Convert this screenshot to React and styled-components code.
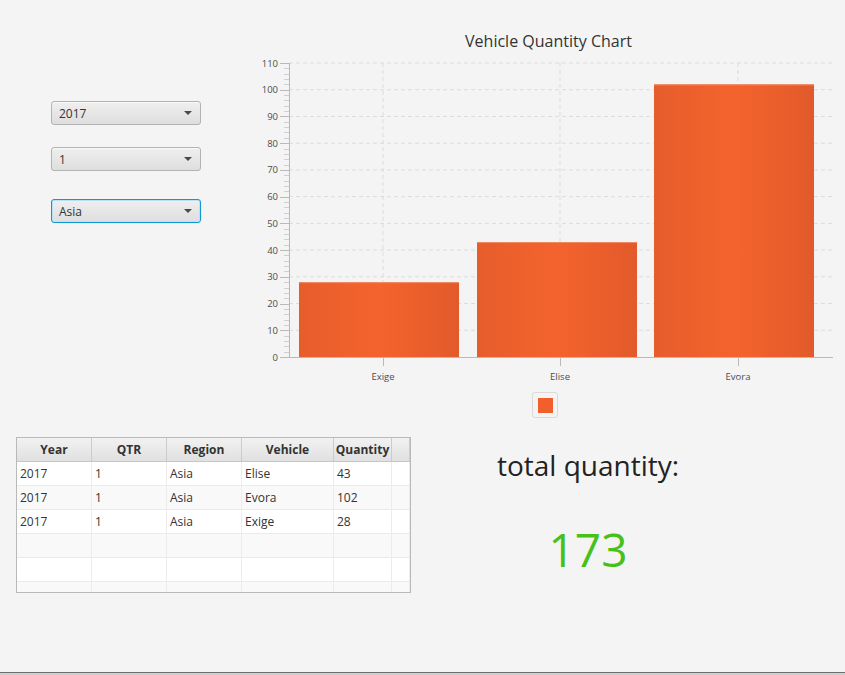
import React from 'react';
import styled, { createGlobalStyle } from 'styled-components';

const GlobalStyle = createGlobalStyle`
  html, body {
    margin: 0;
    padding: 0;
    background: #f4f4f4;
  }
  body {
    font-family: 'Open Sans', 'Noto Sans', 'Liberation Sans', sans-serif;
    color: #333;
  }
`;

const data = [
  { year: '2017', qtr: '1', region: 'Asia', vehicle: 'Elise', quantity: 43 },
  { year: '2017', qtr: '1', region: 'Asia', vehicle: 'Evora', quantity: 102 },
  { year: '2017', qtr: '1', region: 'Asia', vehicle: 'Exige', quantity: 28 },
];

const bars = [
  { name: 'Exige', value: 28, x: 299, center: 383 },
  { name: 'Elise', value: 43, x: 477, center: 560 },
  { name: 'Evora', value: 102, x: 654, center: 738 },
];

const Page = styled.div`
  width: 845px;
  height: 675px;
  display: grid;
  grid-template-rows: 437px 1fr 3px;
  overflow: hidden;
`;

const TopRow = styled.div`
  display: grid;
  grid-template-columns: 250px 1fr;
`;

const Controls = styled.div`
  display: flex;
  flex-direction: column;
  padding: 101px 0 0 51px;
`;

const Combo = styled.div`
  width: 150px;
  height: 24px;
  box-sizing: border-box;
  margin-top: ${(p) => p.$offset || 0}px;
  display: flex;
  align-items: center;
  justify-content: space-between;
  padding: 0 8px 0 7px;
  border-radius: 3px;
  border: 1px solid ${(p) => (p.$focused ? '#0a9bd6' : '#b3b3b3')};
  box-shadow: ${(p) => (p.$focused ? 'inset 0 0 0 1px #b8e2f3' : 'inset 0 1px 0 #f8f8f8')};
  background: linear-gradient(#efefef, #dedede);
  font-size: 12px;
  color: #333;
`;

const Arrow = styled.span`
  width: 0;
  height: 0;
  border-left: 4px solid transparent;
  border-right: 4px solid transparent;
  border-top: 4px solid #4a4a4a;
`;

const ChartArea = styled.div`
  display: flex;
  flex-direction: column;
  align-items: flex-start;
`;

const ChartTitle = styled.div`
  width: 595px;
  margin-top: 30px;
  text-align: center;
  font-size: 16px;
  line-height: 22px;
  color: #333;
  text-indent: 2px;
`;

const ChartSvg = styled.svg`
  display: block;
  width: 595px;
  height: 333px;
  margin-top: 3px;
`;

const LegendBox = styled.div`
  margin: 4px 0 0 282px;
  width: 26px;
  height: 26px;
  box-sizing: border-box;
  border: 1px solid #dadada;
  border-radius: 3px;
  display: flex;
  align-items: center;
  justify-content: center;
`;

const LegendSymbol = styled.span`
  width: 15px;
  height: 15px;
  background: #f1602c;
`;

const BottomRow = styled.div`
  display: grid;
  grid-template-columns: 16px 395px 1fr;
`;

const Table = styled.div`
  grid-column: 2;
  height: 156px;
  box-sizing: border-box;
  border: 1px solid #b9b9b9;
  overflow: hidden;
  background: #fff;
`;

const Row = styled.div`
  display: grid;
  grid-template-columns: 75px 75px 75px 92px 58px 1fr;
  height: 24px;
  box-sizing: border-box;
  border-bottom: 1px solid ${(p) => (p.$header ? '#c6c6c6' : '#ebebeb')};
  background: ${(p) => (p.$header ? 'linear-gradient(#f2f2f2, #e0e0e0)' : p.$odd ? '#f9f9f9' : '#ffffff')};
`;

const Cell = styled.div`
  display: flex;
  align-items: center;
  justify-content: ${(p) => (p.$header ? 'center' : 'flex-start')};
  padding-left: ${(p) => (p.$header ? 0 : 3)}px;
  border-right: 1px solid ${(p) => (p.$header ? '#cbcbcb' : '#ececec')};
  font-size: 12px;
  font-weight: ${(p) => (p.$header ? 700 : 400)};
  color: #333;
  white-space: nowrap;
  overflow: hidden;
`;

const TotalPanel = styled.div`
  grid-column: 3;
  width: 240px;
  margin-left: 57px;
  display: flex;
  flex-direction: column;
  align-items: center;
`;

const TotalLabel = styled.div`
  margin-top: 8px;
  font-size: 28px;
  line-height: 40px;
  color: #222;
`;

const TotalValue = styled.div`
  margin-top: 32px;
  font-size: 46px;
  line-height: 64px;
  color: #45c11a;
`;

const BottomEdge = styled.div`
  border-top: 1px solid #6f6f6f;
  background: #cfcfcf;
`;

const scaleY = (v) => 357 - v * (294 / 110);

function Chart() {
  const majors = [];
  for (let v = 0; v <= 110; v += 10) majors.push(v);
  const minors = [];
  for (let v = 0; v < 110; v += 2) if (v % 10) minors.push(v);

  return (
    <ChartSvg viewBox="250 55 595 333">
      <defs>
        <linearGradient id="barFill" x1="0" x2="1" y1="0" y2="0">
          <stop offset="0" stopColor="#e65d2c" />
          <stop offset="0.5" stopColor="#f4632d" />
          <stop offset="1" stopColor="#e25a2b" />
        </linearGradient>
      </defs>
      {majors.slice(1).map((v) => (
        <line key={'h' + v} x1="289" x2="833" y1={scaleY(v)} y2={scaleY(v)} stroke="#dcdcdc" strokeDasharray="4 3" />
      ))}
      {bars.map((b) => (
        <line key={'v' + b.name} x1={b.center} x2={b.center} y1="63" y2="357" stroke="#dcdcdc" strokeDasharray="4 3" />
      ))}
      {bars.map((b) => (
        <g key={b.name}>
          <rect x={b.x} y={scaleY(b.value)} width="160" height={357 - scaleY(b.value)} fill="url(#barFill)" />
          <line x1={b.x} x2={b.x + 160} y1={scaleY(b.value) + 0.5} y2={scaleY(b.value) + 0.5} stroke="#f08a66" />
          <line x1={b.center + 0.5} x2={b.center + 0.5} y1="357" y2="366" stroke="#b9b9b9" />
          <text x={b.center} y="380" textAnchor="middle" fontSize="9.5" fill="#4d4d4d">{b.name}</text>
        </g>
      ))}
      {minors.map((v) => (
        <line key={'m' + v} x1="284" x2="289" y1={Math.round(scaleY(v)) + 0.5} y2={Math.round(scaleY(v)) + 0.5} stroke="#cfcfcf" />
      ))}
      {majors.map((v) => (
        <g key={'t' + v}>
          <line x1="280" x2="289" y1={Math.round(scaleY(v)) + 0.5} y2={Math.round(scaleY(v)) + 0.5} stroke="#b9b9b9" />
          <text x="278" y={scaleY(v) + 3.5} textAnchor="end" fontSize="9.5" fill="#4d4d4d">{v}</text>
        </g>
      ))}
      <line x1="289.5" x2="289.5" y1="63" y2="357" stroke="#b9b9b9" />
      <line x1="289" x2="833" y1="357.5" y2="357.5" stroke="#b9b9b9" />
    </ChartSvg>
  );
}

export default function App() {
  const total = data.reduce((sum, r) => sum + r.quantity, 0);
  return (
    <>
      <GlobalStyle />
      <Page>
        <TopRow>
          <Controls>
            <Combo>
              <span>2017</span>
              <Arrow />
            </Combo>
            <Combo $offset={22}>
              <span>1</span>
              <Arrow />
            </Combo>
            <Combo $offset={28} $focused>
              <span>Asia</span>
              <Arrow />
            </Combo>
          </Controls>
          <ChartArea>
            <ChartTitle>Vehicle Quantity Chart</ChartTitle>
            <Chart />
            <LegendBox>
              <LegendSymbol />
            </LegendBox>
          </ChartArea>
        </TopRow>
        <BottomRow>
          <Table>
            <Row $header>
              <Cell $header>Year</Cell>
              <Cell $header>QTR</Cell>
              <Cell $header>Region</Cell>
              <Cell $header>Vehicle</Cell>
              <Cell $header>Quantity</Cell>
              <Cell $header />
            </Row>
            {data.map((r, i) => (
              <Row key={r.vehicle} $odd={i % 2 === 1}>
                <Cell>{r.year}</Cell>
                <Cell>{r.qtr}</Cell>
                <Cell>{r.region}</Cell>
                <Cell>{r.vehicle}</Cell>
                <Cell>{r.quantity}</Cell>
                <Cell />
              </Row>
            ))}
            {[3, 4, 5].map((i) => (
              <Row key={'e' + i} $odd={i % 2 === 1}>
                <Cell />
                <Cell />
                <Cell />
                <Cell />
                <Cell />
                <Cell />
              </Row>
            ))}
          </Table>
          <TotalPanel>
            <TotalLabel>total quantity:</TotalLabel>
            <TotalValue>{total}</TotalValue>
          </TotalPanel>
        </BottomRow>
        <BottomEdge />
      </Page>
    </>
  );
}
